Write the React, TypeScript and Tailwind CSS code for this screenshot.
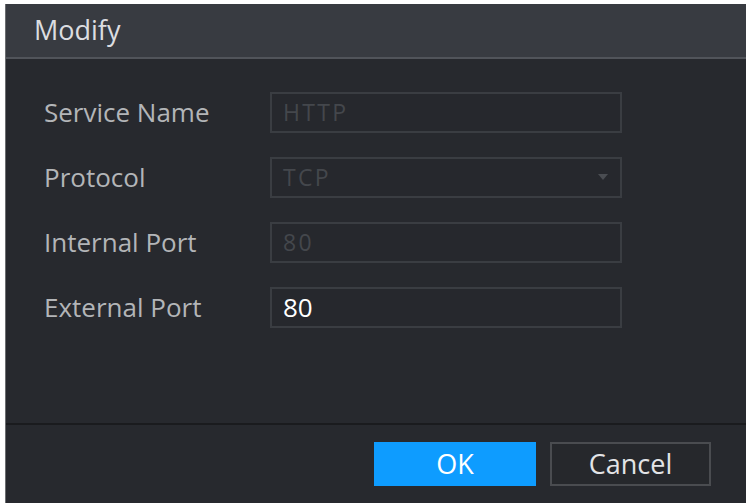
export default function App() {
  const rows = [
    { label: 'Service Name', value: 'HTTP', disabled: true },
    { label: 'Protocol', value: 'TCP', disabled: true, select: true },
    { label: 'Internal Port', value: '80', disabled: true },
    { label: 'External Port', value: '80', disabled: false },
  ]

  return (
    <div className="w-[751px] h-[503px] bg-white pl-[5px] pt-[4px] overflow-hidden" style={{ fontFamily: '"Open Sans", "Noto Sans", sans-serif' }}>
      <div className="w-[741px] h-[499px] bg-[#27292e] border-l border-[#6b6d70] flex flex-col">
        <div className="h-[53px] bg-[#383b41] flex items-center pl-[28px] text-[27px] text-[#dcdde0]">Modify</div>
        <div className="h-[2px] bg-[#51545a]"></div>

        <div className="flex-1 pt-[33px] pl-[38px] flex flex-col gap-[24px]">
          {rows.map((r) => (
            <div key={r.label} className="flex items-center h-[41px]">
              <div className="w-[226px] text-[26px] text-[#b3b5b8]">{r.label}</div>
              <div className="w-[352px] h-[41px] border-2 border-[#3a3d42] bg-[#26282d] flex items-center justify-between pl-[11px] pr-[12px]">
                <span className={r.disabled ? 'text-[23px] text-[#44474c] tracking-[0.1em]' : 'text-[26px] text-white'}>{r.value}</span>
                {r.select && (
                  <svg width="10" height="7" viewBox="0 0 10 7">
                    <path d="M0 0 L10 0 L5 6 Z" fill="#4a4d52" />
                  </svg>
                )}
              </div>
            </div>
          ))}
        </div>

        <div className="h-[2px] bg-[#1a1b1e]"></div>
        <div className="h-[78px] flex items-center justify-end gap-[14px] pr-[35px]">
          <button className="w-[162px] h-[44px] bg-[#0e9cff] text-white text-[27px] flex items-center justify-center">OK</button>
          <button className="w-[161px] h-[44px] border-2 border-[#4a4c50] bg-[#26282c] text-[#e3e4e6] text-[27px] flex items-center justify-center">Cancel</button>
        </div>
      </div>
    </div>
  )
}
